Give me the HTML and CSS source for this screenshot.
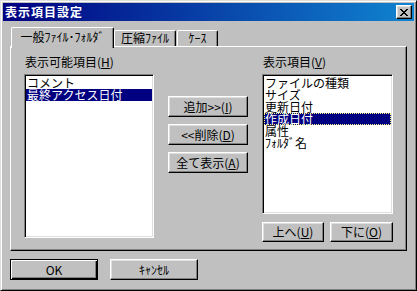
FILE: index.html
```html
<!DOCTYPE html>
<html lang="ja">

<head>
  <meta charset="UTF-8">
  <meta name="viewport" content="width=device-width, initial-scale=1.0">
  <title>表示項目設定</title>
  <link rel="stylesheet" href="styles.css">
</head>

<body>
  <div class="dialog">
    <div class="titlebar">
      <span class="title">表示項目設定</span>
      <span class="close">
        <svg width="8" height="7" viewBox="0 0 8 7">
          <path d="M0 0h2v1h1v1h2v-1h1v-1h2v1h-1v1h-1v1h-1v1h1v1h1v1h1v1h-2v-1h-1v-1h-2v1h-1v1h-2v-1h1v-1h1v-1h1v-1h-1v-1h-1v-1h-1z" fill="#000"/>
        </svg>
      </span>
    </div>
    <div class="content">
      <div class="tabs">
        <div class="tab active">一般ﾌｧｲﾙ･ﾌｫﾙﾀﾞ</div>
        <div class="tab tab-2">圧縮ﾌｧｲﾙ</div>
        <div class="tab tab-3">ｹｰｽ</div>
      </div>
      <div class="panel">
        <div class="col col-left">
          <div class="label">表示可能項目(<u>H</u>)</div>
          <ul class="listbox listbox-left">
            <li>コメント</li>
            <li class="selected">最終アクセス日付</li>
          </ul>
        </div>
        <div class="col col-middle">
          <div class="btn">追加&gt;&gt;(<u>I</u>)</div>
          <div class="btn">&lt;&lt;削除(<u>D</u>)</div>
          <div class="btn">全て表示(<u>A</u>)</div>
        </div>
        <div class="col col-right">
          <div class="label">表示項目(<u>V</u>)</div>
          <ul class="listbox listbox-right">
            <li>ファイルの種類</li>
            <li>サイズ</li>
            <li>更新日付</li>
            <li class="selected focused">作成日付</li>
            <li>属性</li>
            <li>ﾌｫﾙﾀﾞ名</li>
          </ul>
          <div class="order-btns">
            <div class="btn btn-up">上へ(<u>U</u>)</div>
            <div class="btn btn-down">下に(<u>O</u>)</div>
          </div>
        </div>
      </div>
      <div class="footer">
        <div class="btn btn-wide btn-default">OK</div>
        <div class="btn btn-wide">ｷｬﾝｾﾙ</div>
      </div>
    </div>
  </div>
</body>

</html>
```

FILE: styles.css
```css
* {
  margin: 0;
  padding: 0;
  box-sizing: border-box;
}

li {
  list-style: none;
}

body {
  background-color: #c0c0c0;
  font-family: "Noto Sans CJK JP", "Noto Sans", sans-serif;
  font-size: 12px;
  color: #000;
}

u {
  text-underline-offset: 1px;
}

.dialog {
  width: 417px;
  height: 291px;
  padding: 2px;
  background-color: #c0c0c0;
  border: 1px solid;
  border-color: #dfdfdf #000 #000 #dfdfdf;
  box-shadow: inset 1px 1px #fff, inset -1px -1px #808080;
}

/* タイトルバー */
.titlebar {
  height: 18px;
  display: flex;
  align-items: center;
  justify-content: space-between;
  padding: 0 2px;
  background: linear-gradient(to right, #000080, #1084d0);
}

.title {
  color: #fff;
  font-weight: bold;
  font-size: 12px;
  line-height: 18px;
  letter-spacing: 1px;
}

.close {
  width: 16px;
  height: 14px;
  display: flex;
  align-items: center;
  justify-content: center;
  background-color: #c0c0c0;
  border: 1px solid;
  border-color: #fff #000 #000 #fff;
  box-shadow: inset -1px -1px #808080, inset 1px 1px #dfdfdf;
}

.content {
  padding: 6px 7px 0 7px;
}

/* タブ */
.tabs {
  height: 19px;
  display: flex;
  align-items: flex-end;
  position: relative;
  z-index: 2;
}

.tab {
  height: 16px;
  line-height: 14px;
  text-align: center;
  background-color: #c0c0c0;
  border: 1px solid;
  border-bottom: none;
  border-color: #fff #000 #000 #fff;
  box-shadow: inset -1px 0 #808080;
  border-radius: 2px 2px 0 0;
  white-space: nowrap;
}

.tab.active {
  width: 103px;
  height: 21px;
  margin-bottom: -2px;
  margin-left: 1px;
  padding-top: 2px;
}

.tab-2 {
  width: 62px;
  margin-left: 0;
}

.tab-3 {
  width: 41px;
  margin-left: 1px;
}

/* パネル */
.panel {
  height: 205px;
  display: flex;
  gap: 14px;
  padding: 8px 0 0 13px;
  border: 1px solid;
  border-color: #fff #000 #000 #fff;
  box-shadow: inset -1px -1px #808080;
}

.col {
  display: flex;
  flex-direction: column;
}

.col-left {
  width: 130px;
}

.col-middle {
  width: 80px;
  padding-top: 41px;
  gap: 7px;
}

.col-right {
  width: 131px;
}

.label {
  height: 14px;
  line-height: 14px;
  margin-bottom: 5px;
  padding-left: 1px;
  white-space: nowrap;
}

.listbox {
  background-color: #fff;
  padding: 2px 1px;
  border: 1px solid;
  border-color: #808080 #fff #fff #808080;
  box-shadow: inset 1px 1px #000, inset -1px -1px #dfdfdf;
  overflow: hidden;
}

.listbox li {
  height: 12px;
  line-height: 12px;
  padding-left: 1px;
  white-space: nowrap;
}

.listbox .selected {
  background-color: #000080;
  color: #fff;
}

.listbox .focused {
  outline: 1px dotted #ffff80;
  outline-offset: -1px;
}

.listbox-left {
  height: 164px;
}

.listbox-right {
  height: 140px;
}

.order-btns {
  display: flex;
  gap: 6px;
  margin-top: 8px;
}

/* ボタン */
.btn {
  height: 21px;
  line-height: 19px;
  text-align: center;
  white-space: nowrap;
  background-color: #c0c0c0;
  border: 1px solid;
  border-color: #fff #000 #000 #fff;
  box-shadow: inset -1px -1px #808080, inset 1px 1px #dfdfdf;
}

.btn-up {
  width: 62px;
  height: 20px;
  line-height: 18px;
}

.btn-down {
  width: 63px;
  height: 20px;
  line-height: 18px;
}

.footer {
  display: flex;
  gap: 12px;
  margin-top: 8px;
}

.btn-wide {
  width: 88px;
}

.btn-default {
  border-color: #000;
  box-shadow: inset 1px 1px #fff, inset -1px -1px #000, inset -2px -2px #808080;
}
```
